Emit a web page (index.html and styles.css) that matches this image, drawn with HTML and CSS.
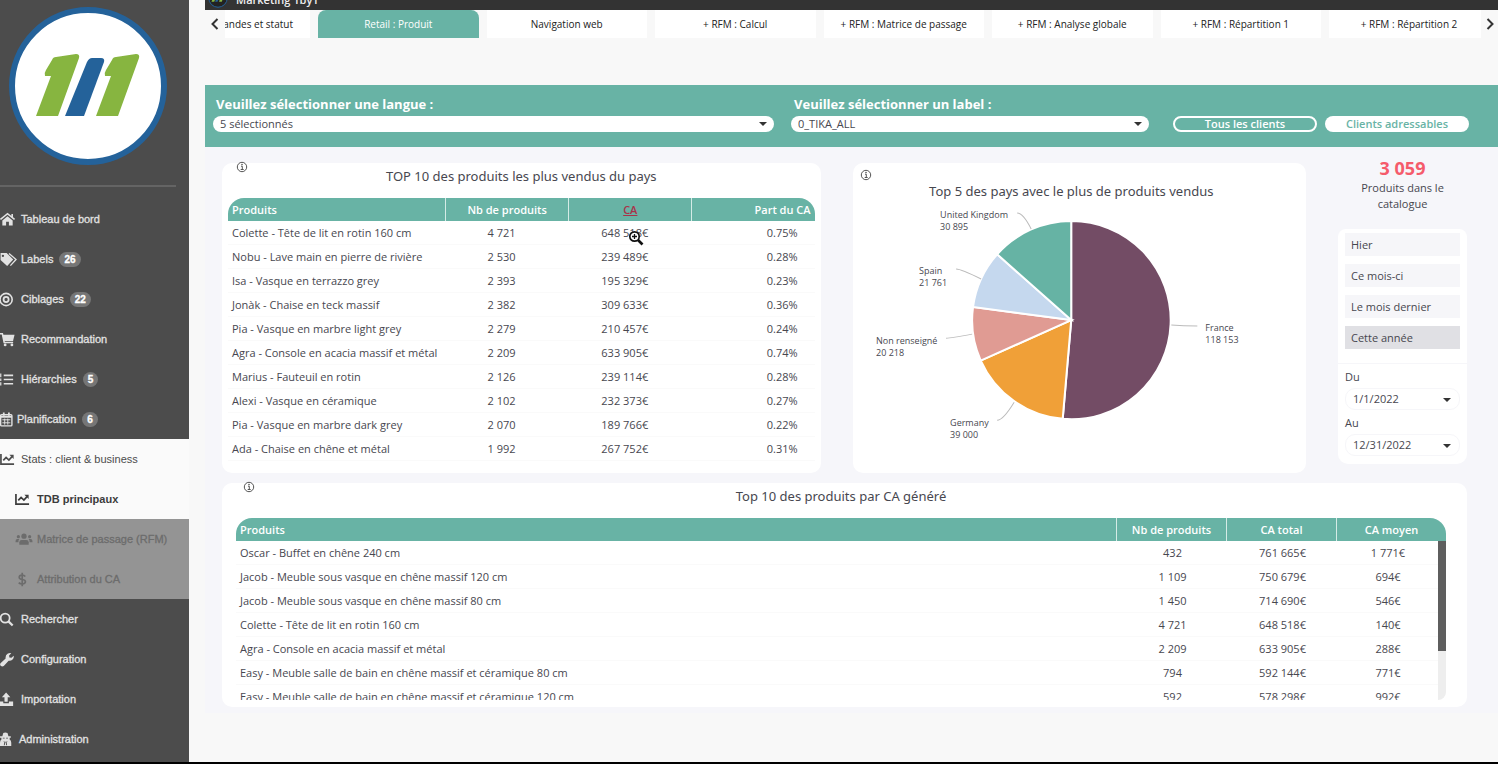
FILE: index.html
```html
<!DOCTYPE html>
<html lang="fr">
<head>
<meta charset="utf-8">
<title>Marketing 1by1</title>
<link rel="stylesheet" href="styles.css">
</head>
<body>
<svg class="defs" aria-hidden="true">
  <symbol id="chart" viewBox="0 0 16 16"><path d="M1 2v11h14" fill="none" stroke="currentColor" stroke-width="1.8"/><path d="M3.5 9l3-3.2 3 2.8 3.3-3.6" fill="none" stroke="currentColor" stroke-width="1.8"/><path d="M10 3h4.500v4.500z" fill="currentColor"/></symbol>
  <symbol id="info" viewBox="0 0 12 12"><circle cx="6" cy="6" r="4.700" fill="none" stroke="currentColor"/><path d="M5 5.200h1.300V8.500M4.700 8.500h3" fill="none" stroke="currentColor"/><circle cx="6" cy="3.500" r=".8" fill="currentColor"/></symbol>
</svg>
<div class="app">
  <aside class="sidebar">
    <svg class="logo" viewBox="0 0 160 160" role="img" aria-label="1by1">
      <circle cx="80" cy="80" r="76" fill="#fff" stroke="#24629a" stroke-width="6"/>
      <g id="mark">
        <path d="M44 54q1-3 4-3l20-3q4 0 3 4L50 110H28L43 70h-6q-1-3 1-6z" fill="#87b540"/>
        <path d="M79 56q2-4 5-4h9q4 0 3 4L76 110H57z" fill="#24629a"/>
        <path d="M104 54q1-3 4-3l20-3q4 0 3 4L110 110H88l15-40h-6q-1-3 1-6z" fill="#87b540"/>
      </g>
    </svg>
    <hr class="divider">
    <nav class="menu">
      <a href="#" class="item"><svg class="icon" viewBox="0 0 16 16"><path d="M8 4.500l5.500 4.600V14.500H9.500V10.500h-3v4H2.500V9.100z" fill="currentColor"/><path d="M.5 8L8 1.800 15.500 8M13 2v3.500" fill="none" stroke="currentColor" stroke-width="1.700"/></svg>Tableau de bord</a>
      <a href="#" class="item"><svg class="icon wide" viewBox="0 0 18 16"><path fill-rule="evenodd" d="M0 1h6.500l7 7-6.500 7L0 8.500zM2.500 2.800a1.200 1.200 0 100 2.500 1.200 1.200 0 000-2.500z" fill="currentColor"/><path d="M9 1.500l7.500 6.500-6 6.500" fill="none" stroke="currentColor" stroke-width="1.400"/></svg>Labels<span class="count">26</span></a>
      <a href="#" class="item"><svg class="icon" viewBox="0 0 16 16" fill="none" stroke="currentColor"><circle cx="6.500" cy="8" r="6.500" stroke-width="1.700"/><circle cx="6.500" cy="8" r="2.700" stroke-width="1.900"/></svg>Ciblages<span class="count">22</span></a>
      <a href="#" class="item"><svg class="icon" viewBox="0 0 16 16"><path d="M0 1.800h2.500L4.500 11.200h9.500" fill="none" stroke="currentColor" stroke-width="1.700"/><path d="M2.500 3h13l-1.600 6.500H4z" fill="currentColor"/><circle cx="5.500" cy="13.800" r="1.500" fill="currentColor"/><circle cx="12.700" cy="13.800" r="1.500" fill="currentColor"/></svg>Recommandation</a>
      <a href="#" class="item"><svg class="icon" viewBox="0 0 16 16" fill="none" stroke="currentColor"><path d="M4 3.500h10M4 8h10M4 12.500h10" stroke-width="1.800"/><path d="M.8 1.500v4M.8 7v2.500M.8 11v3.500" stroke-width="1.300"/></svg>Hiérarchies<span class="count">5</span></a>
      <a href="#" class="item tight"><svg class="icon" viewBox="0 0 16 16" fill="none" stroke="currentColor"><rect x=".7" y="3" width="12" height="11.800" rx="1" stroke-width="1.500"/><path d="M.7 5.200h12M4 .5V4M9.500.5V4" stroke-width="1.900"/><path d="M2.500 8.300h8.500M2.500 11.500h8.500M5 7v6.500M8.300 7v6.500" stroke-width="1"/></svg>Planification<span class="count">6</span></a>
      <a href="#" class="item open"><svg class="icon"><use href="#chart"/></svg>Stats : client &amp; business</a>
      <a href="#" class="item sub open current"><svg class="icon"><use href="#chart"/></svg>TDB principaux</a>
      <a href="#" class="item sub muted"><svg class="icon wide" viewBox="0 0 18 16" fill="currentColor"><circle cx="9" cy="4.500" r="2.800"/><path d="M4 13.500V11q0-2.500 2.500-2.500h5Q14 8.500 14 11v2.500z"/><circle cx="3" cy="5" r="1.700"/><circle cx="15" cy="5" r="1.700"/><path d="M0 11V9.500q0-2 2-2h2Q3 8.500 3 11zM18 11V9.500q0-2-2-2h-2q1 1 1 3.500z"/></svg>Matrice de passage (RFM)</a>
      <a href="#" class="item sub muted"><svg class="icon" viewBox="0 0 16 16"><path d="M11 4.800Q9.800 3.400 7.500 3.400 4.500 3.500 4.500 5.500T7.800 8t3.300 2.500-3.400 2.300Q5.200 12.700 4 11.300M7.700.8v14.400" fill="none" stroke="currentColor" stroke-width="1.800"/></svg>Attribution du CA</a>
      <a href="#" class="item"><svg class="icon" viewBox="0 0 16 16" fill="none" stroke="currentColor"><circle cx="5.500" cy="6.500" r="4.800" stroke-width="1.900"/><path d="M9 10l4.500 4.500" stroke-width="2.300"/></svg>Rechercher</a>
      <a href="#" class="item"><svg class="icon" viewBox="0 0 16 16"><path d="M.5 12L6 6.800Q5.600 3.500 8 1.900 10 .7 12 1.300L9.700 3.700l.3 2.200 2.200.3 2.400-2.300q.5 2.500-1.200 4.200-1.800 1.600-4.200 1.200L4 15q-1.500 1-3 0T.5 12z" fill="currentColor"/></svg>Configuration</a>
      <a href="#" class="item"><svg class="icon" viewBox="0 0 16 16"><path d="M6.500.5L11 5.500H8.200V10.500H4.800V5.500H2zM0 10h3.500v2h6v-2H14v5H0z" fill="currentColor"/></svg>Importation</a>
      <a href="#" class="item snug"><svg class="icon" viewBox="0 0 16 16"><path fill-rule="evenodd" d="M2.500 4.500L3.500 1q2-.8 4.500 0L9 4.500h2.500V6h-1.200v2Q12 9 12 11.500V15H0V11.500Q0 9 1.500 8V6H0V4.500zM3 6v1h2V6zM6.500 6v1h2V6zM3.200 10l1.500 1-.7 3h1l.8-3.500zM8.500 10L7 11l.6 3h-1L6 10.500z" fill="currentColor"/></svg>Administration</a>
    </nav>
  </aside>

  <main class="main">
    <header class="topbar">
      <svg class="topbar-logo" viewBox="0 0 160 160"><circle cx="80" cy="80" r="74" fill="#222" stroke="#24629a" stroke-width="8"/><use href="#mark"/></svg>
      <span>Marketing 1by1</span>
    </header>

    <div class="tabs">
      <button class="arrow" aria-label="Précédent"><svg viewBox="0 0 8 12"><path d="M6.500 1L1.500 6l5 5" fill="none" stroke="currentColor" stroke-width="2"/></svg></button>
      <div class="strip">
        <button class="tab first">Commandes et statut</button>
        <button class="tab active">Retail : Produit</button>
        <button class="tab">Navigation web</button>
        <button class="tab">+ RFM : Calcul</button>
        <button class="tab">+ RFM : Matrice de passage</button>
        <button class="tab">+ RFM : Analyse globale</button>
        <button class="tab">+ RFM : Répartition 1</button>
        <button class="tab last">+ RFM : Répartition 2</button>
      </div>
      <button class="arrow" aria-label="Suivant"><svg viewBox="0 0 8 12"><path d="M1.500 1l5 5-5 5" fill="none" stroke="currentColor" stroke-width="2"/></svg></button>
    </div>

    <section class="filters">
      <div class="field">
        <label for="langue">Veuillez sélectionner une langue :</label>
        <div class="select"><select id="langue"><option>5 sélectionnés</option></select></div>
      </div>
      <div class="field">
        <label for="label">Veuillez sélectionner un label :</label>
        <div class="select"><select id="label"><option>0_TIKA_ALL</option></select></div>
      </div>
      <button class="pill outline">Tous les clients</button>
      <button class="pill">Clients adressables</button>
    </section>

    <div class="board">
      <section class="card sales">
        <svg class="info"><use href="#info"/></svg>
        <h2>TOP 10 des produits les plus vendus du pays</h2>
        <div class="frame">
          <table class="grid">
            <colgroup><col class="c-name"><col><col><col></colgroup>
            <thead><tr><th>Produits</th><th>Nb de produits</th><th><a href="#">CA</a></th><th>Part du CA</th></tr></thead>
            <tbody>
              <tr><td>Colette - Tête de lit en rotin 160 cm</td><td>4 721</td><td>648 518€</td><td>0.75%</td></tr>
              <tr><td>Nobu - Lave main en pierre de rivière</td><td>2 530</td><td>239 489€</td><td>0.28%</td></tr>
              <tr><td>Isa - Vasque en terrazzo grey</td><td>2 393</td><td>195 329€</td><td>0.23%</td></tr>
              <tr><td>Jonàk - Chaise en teck massif</td><td>2 382</td><td>309 633€</td><td>0.36%</td></tr>
              <tr><td>Pia - Vasque en marbre light grey</td><td>2 279</td><td>210 457€</td><td>0.24%</td></tr>
              <tr><td>Agra - Console en acacia massif et métal</td><td>2 209</td><td>633 905€</td><td>0.74%</td></tr>
              <tr><td>Marius - Fauteuil en rotin</td><td>2 126</td><td>239 114€</td><td>0.28%</td></tr>
              <tr><td>Alexi - Vasque en céramique</td><td>2 102</td><td>232 373€</td><td>0.27%</td></tr>
              <tr><td>Pia - Vasque en marbre dark grey</td><td>2 070</td><td>189 766€</td><td>0.22%</td></tr>
              <tr><td>Ada - Chaise en chêne et métal</td><td>1 992</td><td>267 752€</td><td>0.31%</td></tr>
            </tbody>
          </table>
          <svg class="cursor" viewBox="0 0 16 16"><circle cx="6.500" cy="6.500" r="4.700" fill="#fff" stroke="#111" stroke-width="1.700"/><path d="M10 10l4.500 4.500" stroke="#111" stroke-width="2.600"/><path d="M6.500 4v5M4 6.500h5" stroke="#111" stroke-width="1.300"/></svg>
        </div>
      </section>

      <section class="card countries">
        <svg class="info"><use href="#info"/></svg>
        <h2>Top 5 des pays avec le plus de produits vendus</h2>
        <svg class="pie" viewBox="0 0 453 250">
          <g transform="translate(218 117)" stroke="#fff" stroke-width="2">
            <path d="M0 0V-99A99 99 0 1 1-8.500 98.600z" fill="#734c65"/>
            <path d="M0 0L-8.500 98.600A99 99 0 0 1-90.400 40.400z" fill="#f0a038"/>
            <path d="M0 0L-90.400 40.400A99 99 0 0 1-98.100-13.100z" fill="#e09b93"/>
            <path d="M0 0L-98.100-13.100A99 99 0 0 1-74-65.800z" fill="#c5d8ee"/>
            <path d="M0 0L-74-65.800A99 99 0 0 1 0-99z" fill="#66b3a4"/>
          </g>
          <g fill="none" stroke="#bbb">
            <path d="M164 10q6 0 14 16"/><path d="M103 66q5 0 25 10"/><path d="M93 135q5 0 26-4"/><path d="M144 217q6 0 17-18"/><path d="M318 122q12 1 26 1"/>
          </g>
          <g class="pie-labels">
            <text x="87" y="15">United Kingdom</text><text x="87" y="27">30 895</text>
            <text x="66" y="71">Spain</text><text x="66" y="83">21 761</text>
            <text x="23" y="141">Non renseigné</text><text x="23" y="153">20 218</text>
            <text x="97" y="223">Germany</text><text x="97" y="235">39 000</text>
            <text x="352" y="128">France</text><text x="352" y="140">118 153</text>
          </g>
        </svg>
      </section>

      <aside class="side">
        <p class="stat">3 059</p>
        <p class="stat-label">Produits dans le catalogue</p>
        <div class="panel periods">
          <button>Hier</button>
          <button>Ce mois-ci</button>
          <button>Le mois dernier</button>
          <button class="on">Cette année</button>
        </div>
        <div class="panel dates">
          <label for="du">Du</label>
          <div class="select"><select id="du"><option>1/1/2022</option></select></div>
          <label for="au">Au</label>
          <div class="select"><select id="au"><option>12/31/2022</option></select></div>
        </div>
      </aside>

      <section class="card revenue">
        <svg class="info"><use href="#info"/></svg>
        <h2>Top 10 des produits par CA généré</h2>
        <div class="frame scroll">
          <table class="grid">
            <colgroup><col><col class="c-num"><col class="c-num"><col class="c-num"></colgroup>
            <thead><tr><th>Produits</th><th>Nb de produits</th><th>CA total</th><th>CA moyen</th></tr></thead>
            <tbody>
              <tr><td>Oscar - Buffet en chêne 240 cm</td><td>432</td><td>761 665€</td><td>1 771€</td></tr>
              <tr><td>Jacob - Meuble sous vasque en chêne massif 120 cm</td><td>1 109</td><td>750 679€</td><td>694€</td></tr>
              <tr><td>Jacob - Meuble sous vasque en chêne massif 80 cm</td><td>1 450</td><td>714 690€</td><td>546€</td></tr>
              <tr><td>Colette - Tête de lit en rotin 160 cm</td><td>4 721</td><td>648 518€</td><td>140€</td></tr>
              <tr><td>Agra - Console en acacia massif et métal</td><td>2 209</td><td>633 905€</td><td>288€</td></tr>
              <tr><td>Easy - Meuble salle de bain en chêne massif et céramique 80 cm</td><td>794</td><td>592 144€</td><td>771€</td></tr>
              <tr><td>Easy - Meuble salle de bain en chêne massif et céramique 120 cm</td><td>592</td><td>578 298€</td><td>992€</td></tr>
            </tbody>
          </table>
          <div class="track"><div class="thumb"></div></div>
        </div>
      </section>
    </div>
  </main>
</div>
</body>
</html>
```
FILE: styles.css
```css
* { box-sizing: border-box; }

body {
  margin: 0;
  background: #f8f8f8;
  color: #47474f;
  font: 11px/16px "Open Sans", "Noto Sans", sans-serif;
}

button, select { font: inherit; color: inherit; border: 0; margin: 0; }
h2, p { margin: 0; }
.defs { display: none; }

.app {
  display: flex;
  min-height: 100vh;
  border-bottom: 2px solid #000;
}

/* Sidebar */
.sidebar {
  flex: 0 0 189px;
  padding-top: 6px;
  background: #4c4c4c;
  font: 11px/16px "Liberation Sans", Arial, sans-serif;
}
.logo { display: block; width: 160px; height: 160px; margin-left: 8px; }
.divider { height: 2px; margin: 19px 13px 12px 0; border: 0; background: #646464; }
.item {
  display: flex;
  align-items: center;
  height: 40px;
  color: #e2e2e2;
  text-decoration: none;
  white-space: nowrap;
  -webkit-text-stroke: 0.3px currentColor;
}
.icon { flex: none; width: 15px; height: 15px; margin-right: 6px; }
.icon.wide { width: 18px; margin-right: 3px; }
.tight .icon { margin-right: 2px; }
.snug .icon { margin-right: 4px; }
.count {
  margin-left: 6px;
  padding: 0 5px;
  border-radius: 8px;
  background: #767676;
  color: #fff;
  font-size: 10px;
  font-weight: bold;
  line-height: 15px;
}
.open { background: #fafafa; color: #4c4c4c; -webkit-text-stroke: 0; }
.sub { padding-left: 15px; }
.sub .icon { margin-right: 7px; }
.sub .icon.wide { margin-right: 4px; }
.current { color: #3c3c3c; font-weight: bold; }
.muted { background: #949494; color: #6c6c6c; }

/* Top bar and tabs */
.main { flex: 1; min-width: 0; padding-left: 16px; }
.topbar {
  display: flex;
  align-items: flex-end;
  gap: 8px;
  height: 10px;
  padding: 0 3px 2px;
  overflow: hidden;
  background: #333;
  color: #eee;
  font-weight: 600;
}
.topbar-logo { width: 20px; height: 20px; }
.tabs { display: flex; height: 28px; }
.arrow {
  display: flex;
  align-items: center;
  justify-content: center;
  flex: 0 0 17px;
  padding: 0;
  background: none;
  color: #333;
}
.arrow:first-child { flex-basis: 20px; }
.arrow svg { width: 8px; height: 12px; }
.strip {
  display: grid;
  grid-template-columns: 85px repeat(6, 1fr) 152px;
  gap: 8px;
  flex: 1;
  min-width: 0;
}
.tab {
  padding: 0;
  background: #fff;
  color: #222;
  font-size: 10px;
  font-weight: 500;
  white-space: nowrap;
  overflow: hidden;
}
.tab.active { border-radius: 8px 8px 0 0; background: #68b3a5; color: #fff; }
.tab.first { display: flex; justify-content: flex-end; align-items: center; padding-right: 17px; }
.tab.last { padding-left: 8px; }

/* Filters */
.filters {
  display: grid;
  grid-template-columns: 561fr 375fr 168px 152px;
  align-items: end;
  margin-top: 47px;
  padding: 11px 29px 15px 8px;
  background: #68b3a5;
}
.filters .field + .field { margin-left: 17px; }
.filters label {
  display: block;
  padding: 0 3px 4px;
  color: #fff;
  font-size: 13px;
  font-weight: 700;
}
.select { position: relative; display: flex; }
.select select {
  flex: 1;
  min-width: 0;
  height: 16px;
  padding: 0 24px 0 7px;
  border-radius: 8px;
  background: #fff;
  appearance: none;
}
.select::after {
  content: "";
  position: absolute;
  right: 7px;
  top: 50%;
  margin-top: -2px;
  border: 4px solid transparent;
  border-top-color: #333;
  border-bottom: 0;
}
.pill {
  height: 16px;
  margin-left: 8px;
  padding: 0;
  border-radius: 8px;
  background: #fff;
  color: #68b3a5;
  font-weight: 600;
  line-height: 12px;
}
.pill.outline { margin-left: 24px; border: 2px solid #fff; background: none; color: #fff; }

/* Dashboard */
.board {
  display: grid;
  grid-template-columns: 598fr 453fr 129px;
  column-gap: 32px;
  row-gap: 10px;
  padding: 9px 31px 6px 17px;
  background: #f6f6fa;
}
.card {
  position: relative;
  border-radius: 10px;
  background: #fff;
}
.card h2 {
  color: #47474f;
  font-family: "Noto Sans", "Open Sans", sans-serif;
  font-size: 13px;
  font-weight: 400;
  line-height: 20px;
  text-align: center;
}
.info { position: absolute; width: 12px; height: 12px; color: #555; }
.sales { margin-top: 7px; padding: 3px 6px 12px; }
.sales .info { left: 14px; top: -2px; }
.countries { margin-top: 7px; padding-top: 18px; }
.countries .info { left: 7px; top: 6px; }
.countries h2 { padding: 0 16px 2px 0; }
.pie { display: block; width: 100%; }
.pie-labels { fill: #47474f; font-size: 9px; }
.revenue { grid-column: 1 / -1; padding: 3px 21px 7px 14px; }
.revenue .info { left: 21px; top: -2px; }

.frame { position: relative; margin-top: 12px; border-radius: 16px 16px 0 0; overflow: hidden; }
.grid { width: 100%; border-collapse: separate; border-spacing: 0; table-layout: fixed; }
.c-name { width: 37%; }
.c-num { width: 110px; }
.grid th {
  height: 23px;
  padding: 0;
  border-left: 1px solid #d5ebe6;
  background: #68b3a5;
  color: #fff;
  font-weight: 600;
}
.grid th a { color: #a8324a; }
.grid td {
  height: 24px;
  padding: 0 13px 0 0;
  border-bottom: 1px solid #fafafa;
  text-align: center;
}
.grid th:first-child, .grid td:first-child {
  padding-left: 4px;
  border-left: 0;
  text-align: left;
}
.grid td:first-child { white-space: nowrap; padding-right: 0; }
.sales td:nth-child(n+2) { padding-right: 10px; }
.sales th:last-child { padding-right: 4px; text-align: right; }
.sales td:last-child { padding-right: 17px; text-align: right; }
.cursor { position: absolute; left: 400px; top: 32px; width: 16px; height: 16px; }

.scroll { height: 182px; }
.revenue td { padding: 0 0 0 3px; }
.revenue td:last-child { padding: 0 6px 0 0; }
.track {
  position: absolute;
  top: 23px;
  right: 0;
  bottom: 0;
  width: 8px;
  border-radius: 0 0 8px 0;
  background: #eee;
}
.thumb { height: 110px; background: #5e5e5e; }

/* Catalogue count and period */
.side { display: flex; flex-direction: column; text-align: center; }
.stat { color: #f55b6b; font-size: 18px; font-weight: 700; line-height: 24px; }
.stat-label { padding: 0 18px; }
.panel {
  display: flex;
  flex-direction: column;
  padding: 4px 7px;
  background: #fff;
  text-align: left;
}
.periods { gap: 8px; margin-top: 17px; padding-bottom: 14px; border-radius: 8px 8px 0 0; }
.periods button { height: 23px; padding: 0 6px; background: #f6f6f9; text-align: left; }
.periods button.on { background: #e0e0e4; }
.dates { border-top: 1px solid #f6f6f9; border-radius: 0 0 10px 10px; padding-bottom: 4px; }
.dates label { padding-top: 1px; }
.dates .select select { height: 22px; margin: 3px 0 4px; border-radius: 10px; border: 1px solid #f6f6f9; }
.dates .select::after { right: 9px; }
```
